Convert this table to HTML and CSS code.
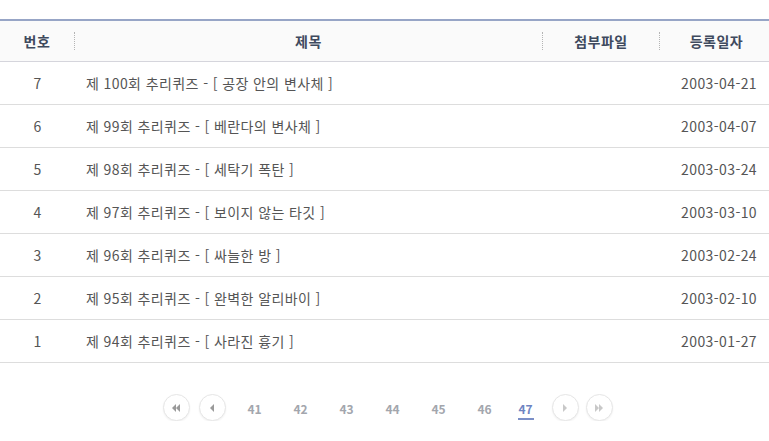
FILE: index.html
```html
<!DOCTYPE html>
<html lang="ko">
<head>
<meta charset="utf-8">
<link rel="stylesheet" href="styles.css">
</head>
<body>
<table class="board">
  <thead>
    <tr>
      <th class="c-no"><span class="sep">번호</span></th>
      <th class="c-title"><span class="sep">제목</span></th>
      <th class="c-file"><span class="sep">첨부파일</span></th>
      <th class="c-date">등록일자</th>
    </tr>
  </thead>
  <tbody>
    <tr><td class="c-no">7</td><td class="c-title">제 100회 추리퀴즈 - [ 공장 안의 변사체 ]</td><td class="c-file"></td><td class="c-date">2003-04-21</td></tr>
    <tr><td class="c-no">6</td><td class="c-title">제 99회 추리퀴즈 - [ 베란다의 변사체 ]</td><td class="c-file"></td><td class="c-date">2003-04-07</td></tr>
    <tr><td class="c-no">5</td><td class="c-title">제 98회 추리퀴즈 - [ 세탁기 폭탄 ]</td><td class="c-file"></td><td class="c-date">2003-03-24</td></tr>
    <tr><td class="c-no">4</td><td class="c-title">제 97회 추리퀴즈 - [ 보이지 않는 타깃 ]</td><td class="c-file"></td><td class="c-date">2003-03-10</td></tr>
    <tr><td class="c-no">3</td><td class="c-title">제 96회 추리퀴즈 - [ 싸늘한 방 ]</td><td class="c-file"></td><td class="c-date">2003-02-24</td></tr>
    <tr><td class="c-no">2</td><td class="c-title">제 95회 추리퀴즈 - [ 완벽한 알리바이 ]</td><td class="c-file"></td><td class="c-date">2003-02-10</td></tr>
    <tr><td class="c-no">1</td><td class="c-title">제 94회 추리퀴즈 - [ 사라진 흉기 ]</td><td class="c-file"></td><td class="c-date">2003-01-27</td></tr>
  </tbody>
</table>
<nav class="paging">
  <a class="btn first" href="#"><svg width="10" height="8" viewBox="0 0 10 8"><path d="M5 0L1 4L5 8Z M9 0L5 4L9 8Z" fill="#9a9a9a"/></svg></a>
  <a class="btn prev" href="#"><svg width="6" height="8" viewBox="0 0 6 8"><path d="M5 0L1 4L5 8Z" fill="#9a9a9a"/></svg></a>
  <a class="num" href="#">41</a>
  <a class="num" href="#">42</a>
  <a class="num" href="#">43</a>
  <a class="num" href="#">44</a>
  <a class="num" href="#">45</a>
  <a class="num" href="#">46</a>
  <a class="num on" href="#">47</a>
  <a class="btn next" href="#"><svg width="6" height="8" viewBox="0 0 6 8"><path d="M1 0L5 4L1 8Z" fill="#c8c8c8"/></svg></a>
  <a class="btn last" href="#"><svg width="10" height="8" viewBox="0 0 10 8"><path d="M1 0L5 4L1 8Z M5 0L9 4L5 8Z" fill="#c8c8c8"/></svg></a>
</nav>
</body>
</html>
```

FILE: styles.css
```css
html, body {
  margin: 0;
  padding: 0;
  background: #fff;
}
body {
  font-family: "Noto Sans CJK KR", "Noto Sans", sans-serif;
  font-size: 14px;
  color: #555;
}
.board {
  width: 769px;
  margin-top: 19px;
  border-collapse: collapse;
  table-layout: fixed;
  border-top: 2px solid #97a5c6;
}
.board th, .board td {
  box-sizing: border-box;
}
.board th {
  height: 41px;
  padding: 0;
  background: #fafafa;
  border-bottom: 1px solid #d5d5dc;
  color: #3f4a5e;
  font-weight: bold;
  font-size: 14px;
  letter-spacing: 0.5px;
}
.board th .sep {
  display: block;
  line-height: 18px;
  border-right: 1px dotted #b4b4b4;
}
.board td {
  height: 43.14px;
  padding: 0;
  border-bottom: 1px solid #dddddd;
  font-size: 14px;
  letter-spacing: 0.4px;
  color: #555;
  line-height: 20px;
}
.c-no { width: 75px; text-align: center; }
.c-title { width: 468px; }
td.c-title { padding-left: 11px; text-align: left; }
.c-file { width: 117px; text-align: center; }
.c-date { width: 109px; text-align: center; }
th.c-date { padding-left: 4px; }
td.c-date { text-align: right; padding-right: 12px; }

.paging {
  display: flex;
  align-items: center;
  justify-content: center;
  margin-top: 31px;
  padding-left: 6px;
}
.paging a { text-decoration: none; }
.btn {
  width: 25px;
  height: 25px;
  border: 1px solid #e6e6e6;
  border-radius: 50%;
  display: flex;
  align-items: center;
  justify-content: center;
  box-shadow: 0 1px 2px rgba(0,0,0,0.06);
  background: #fff;
}
.btn.first { margin-right: 9px; }
.btn.prev { margin-right: 6px; }
.btn.next { margin-left: 8px; margin-right: 7px; }
.num {
  width: 46px;
  text-align: center;
  font-size: 12px;
  font-weight: bold;
  color: #a3a6ad;
  line-height: 20px;
  padding-top: 3px;
}
.num.on {
  width: 36px;
  color: #6e84c2;
  position: relative;
}
.num.on::after {
  content: "";
  position: absolute;
  left: 10px;
  right: 10px;
  bottom: -1px;
  height: 2px;
  background: #7b8fc7;
}
```
